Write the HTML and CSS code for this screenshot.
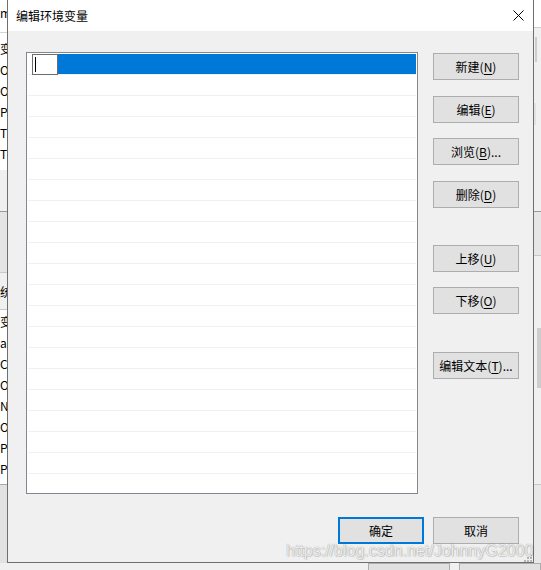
FILE: index.html
```html
<!DOCTYPE html>
<html lang="zh-CN">
<head>
<meta charset="utf-8">
<title>编辑环境变量</title>
<link rel="stylesheet" href="styles.css">
</head>
<body>
<div class="desktop">
  <div class="back-left">
    <div class="bl-head"><span>m</span></div>
    <div class="bl-list">
      <div class="bl-row">变</div>
      <div class="bl-row">O</div>
      <div class="bl-row">O</div>
      <div class="bl-row">Pa</div>
      <div class="bl-row">TE</div>
      <div class="bl-row">TM</div>
    </div>
    <div class="bl-gap"></div>
    <div class="bl-band"></div>
    <div class="bl-group">统</div>
    <div class="bl-list2">
      <div class="bl-row">变</div>
      <div class="bl-row">as</div>
      <div class="bl-row">Co</div>
      <div class="bl-row">Or</div>
      <div class="bl-row">N</div>
      <div class="bl-row">O</div>
      <div class="bl-row">Pa</div>
      <div class="bl-row">PA</div>
    </div>
    <div class="bl-foot"></div>
  </div>

  <div class="back-right">
    <div class="br-head"></div>
    <div class="br-track">
      <div class="br-thumb"></div>
      <div class="br-thumb2"></div>
    </div>
    <div class="br-band"></div>
    <div class="br-track2">
      <div class="br-thumb3"></div>
    </div>
    <div class="br-foot"></div>
  </div>

  <div class="back-bottom">
    <div class="bb-btn bb-1"></div>
    <div class="bb-btn bb-2"></div>
  </div>

  <div class="dialog">
    <div class="titlebar">
      <span class="title">编辑环境变量</span>
      <svg class="close" width="11" height="11" viewBox="0 0 11 11" aria-hidden="true">
        <path d="M0.5 0.5 L10.5 10.5 M10.5 0.5 L0.5 10.5" stroke="#000" stroke-width="1" fill="none"/>
      </svg>
    </div>
    <div class="content">
      <div class="main">
        <div class="listbox">
          <div class="row selected">
            <div class="lead"></div>
            <div class="editbox"><span class="caret"></span></div>
            <div class="hilite"></div>
          </div>
          <div class="row"></div><div class="row"></div><div class="row"></div>
          <div class="row"></div><div class="row"></div><div class="row"></div>
          <div class="row"></div><div class="row"></div><div class="row"></div>
          <div class="row"></div><div class="row"></div><div class="row"></div>
          <div class="row"></div><div class="row"></div><div class="row"></div>
          <div class="row"></div><div class="row"></div><div class="row"></div>
          <div class="row"></div><div class="row"></div>
        </div>
        <div class="side">
          <button class="btn">新建(<u>N</u>)</button>
          <button class="btn sp16">编辑(<u>E</u>)</button>
          <button class="btn sp15">浏览(<u>B</u>)...</button>
          <button class="btn sp16">删除(<u>D</u>)</button>
          <button class="btn sp37">上移(<u>U</u>)</button>
          <button class="btn sp15">下移(<u>O</u>)</button>
          <button class="btn sp38">编辑文本(<u>T</u>)...</button>
        </div>
      </div>
      <div class="footer">
        <button class="btn primary">确定</button>
        <button class="btn">取消</button>
      </div>
    </div>
  </div>

  <svg class="grip" width="8" height="8" viewBox="0 0 8 8" aria-hidden="true">
    <rect x="6" y="0" width="2" height="2" fill="#b5b5b5"/>
    <rect x="3" y="3" width="2" height="2" fill="#b5b5b5"/>
    <rect x="6" y="3" width="2" height="2" fill="#b5b5b5"/>
    <rect x="0" y="6" width="2" height="2" fill="#b5b5b5"/>
    <rect x="3" y="6" width="2" height="2" fill="#b5b5b5"/>
    <rect x="6" y="6" width="2" height="2" fill="#b5b5b5"/>
  </svg>

  <div class="watermark">https://blog.csdn.net/JohnnyG2000</div>
</div>
</body>
</html>
```

FILE: styles.css
```css
* {
  box-sizing: border-box;
}

body {
  margin: 0;
  font-family: "Noto Sans CJK SC", "Microsoft YaHei", sans-serif;
  font-size: 12px;
  color: #000;
}

.desktop {
  position: relative;
  width: 541px;
  height: 570px;
  overflow: hidden;
  background: #f0f0f0;
}

/* ---------- windows behind the dialog ---------- */
.back-left {
  position: absolute;
  left: 0;
  top: 0;
  width: 40px;
  height: 570px;
  display: flex;
  flex-direction: column;
  background: #f0f0f0;
  font-size: 12px;
  line-height: 21px;
  color: #000;
}

.bl-head {
  height: 33px;
  background: #fff;
  border-bottom: 1px solid #d4d4d4;
  padding-top: 3px;
  line-height: 20px;
}

.bl-list {
  background: #fff;
  padding-top: 5px;
  height: 137px;
}

.bl-row {
  height: 21px;
  white-space: nowrap;
}

.bl-gap {
  height: 42px;
  background: #f0f0f0;
  border-bottom: 1px solid #9a9a9a;
}

.bl-band {
  height: 61px;
  background: #e4e4e4;
  border-bottom: 1px solid #c8c8c8;
}

.bl-group {
  height: 37px;
  line-height: 37px;
  background: #f0f0f0;
  border-bottom: 1px solid #c8c8c8;
}

.bl-list2 {
  background: #fff;
  height: 175px;
  padding-top: 1px;
  border-bottom: 1px solid #a8a8a8;
}

.bl-foot {
  flex: 1;
  background: #e2e2e2;
}

.back-right {
  position: absolute;
  left: 530px;
  top: 0;
  width: 11px;
  height: 570px;
  display: flex;
  flex-direction: column;
  background: #f0f0f0;
}

.br-head {
  height: 28px;
  background: #fff;
  border-bottom: 1px solid #cfcfcf;
}

.br-track {
  height: 183px;
  padding-left: 5px;
  padding-top: 9px;
  display: flex;
  flex-direction: column;
}

.br-thumb {
  width: 2px;
  height: 25px;
  background: #cdcdcd;
}

.br-thumb2 {
  width: 2px;
  height: 22px;
  margin-top: 41px;
  margin-left: -1px;
  background: #e3e3e3;
}

.br-band {
  height: 45px;
  background: #e6e6e6;
  border-top: 1px solid #9a9a9a;
  border-bottom: 1px solid #c8c8c8;
}

.br-track2 {
  height: 229px;
  padding-left: 7px;
  padding-top: 72px;
  border-bottom: 1px solid #c8c8c8;
}

.br-thumb3 {
  width: 4px;
  height: 60px;
  background: #cdcdcd;
}

.br-foot {
  flex: 1;
  background: #e8e8e8;
}

.back-bottom {
  position: absolute;
  left: 0;
  top: 563px;
  width: 541px;
  height: 7px;
  background: #f0f0f0;
  display: flex;
  padding-left: 368px;
  gap: 9px;
}

.bb-btn {
  height: 20px;
  background: #e1e1e1;
  border: 1px solid #adadad;
}

.bb-1 {
  width: 86px;
}

.bb-2 {
  width: 86px;
}

/* ---------- dialog ---------- */
.dialog {
  position: absolute;
  left: 7px;
  top: 0;
  width: 527px;
  height: 563px;
  background: #f0f0f0;
  border: 1px solid #6f6f6f;
  border-top: none;
  display: flex;
  flex-direction: column;
}

.titlebar {
  height: 31px;
  background: #fff;
  display: flex;
  align-items: center;
  justify-content: space-between;
  padding: 0 9px 0 8px;
}

.title {
  font-size: 12px;
  line-height: 16px;
  color: #000;
}

.close {
  display: block;
}

.content {
  flex: 1;
  display: flex;
  flex-direction: column;
  padding: 21px 14px 18px 18px;
}

.main {
  display: flex;
  gap: 15px;
}

.listbox {
  width: 392px;
  height: 442px;
  border: 1px solid #828790;
  background: #fff;
  padding: 1px;
  overflow: hidden;
}

.row {
  height: 21px;
  border-bottom: 1px solid #f0f0f0;
  display: flex;
  align-items: flex-start;
}

.lead {
  width: 4px;
  height: 20px;
}

.editbox {
  width: 26px;
  height: 21px;
  border: 1px solid #6d6d6d;
  background: #fff;
  padding: 2px 0 0 2px;
  flex: none;
}

.caret {
  display: block;
  width: 1px;
  height: 15px;
  background: #000;
}

.hilite {
  flex: 1;
  height: 20px;
  background: #0078d7;
}

.side {
  width: 86px;
  display: flex;
  flex-direction: column;
  padding-top: 1px;
}

.btn {
  width: 86px;
  height: 27px;
  margin: 0;
  padding: 0;
  border: 1px solid #adadad;
  background: #e1e1e1;
  font-family: "Noto Sans CJK SC", "Microsoft YaHei", sans-serif;
  font-size: 12px;
  line-height: 16px;
  color: #000;
  text-align: center;
  flex: none;
}

.btn u {
  text-decoration: underline;
  text-underline-offset: 2px;
}

.sp15 {
  margin-top: 15px;
}

.sp16 {
  margin-top: 16px;
}

.sp37 {
  margin-top: 37px;
}

.sp38 {
  margin-top: 38px;
}

.footer {
  margin-top: 23px;
  display: flex;
  justify-content: flex-end;
  gap: 9px;
}

.primary {
  border: 2px solid #0078d7;
}

/* ---------- overlays ---------- */
.grip {
  position: absolute;
  left: 524px;
  top: 554px;
}

.watermark {
  position: absolute;
  left: 286px;
  top: 543px;
  font-family: "Liberation Sans", Arial, sans-serif;
  font-size: 16px;
  line-height: 16px;
  white-space: nowrap;
  color: rgba(255, 255, 255, 0.85);
  text-shadow: 0 0 1px rgba(0, 0, 0, 0.45), 1px 1px 1px rgba(0, 0, 0, 0.12);
}
```
